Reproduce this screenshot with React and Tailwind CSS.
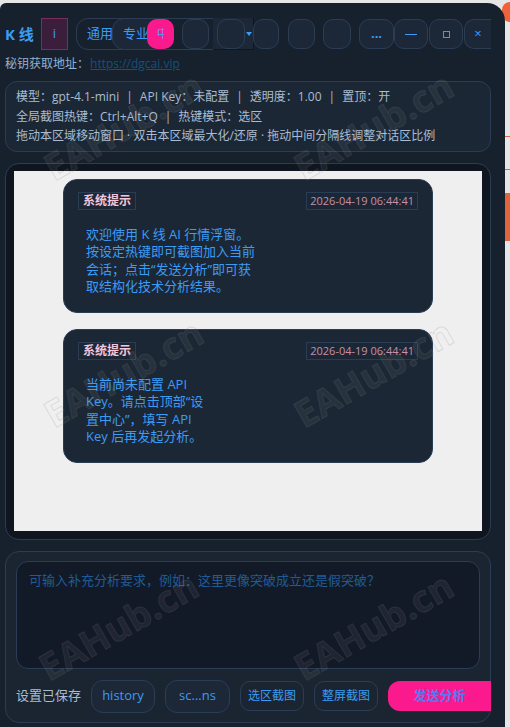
import React from 'react';

const Mark = ({ className }) => (
  <div className={`absolute font-['Open_Sans',sans-serif] font-bold text-[37px] leading-none text-white/[0.05] [-webkit-text-stroke:1px_rgba(120,120,120,0.2)] -rotate-[30deg] whitespace-nowrap ${className}`}>
    EAHub.cn
  </div>
);

const TopBtn = ({ className = '', children }) => (
  <div className={`shrink-0 h-[30px] flex items-center justify-center rounded-[10px] border border-[#2b3d55] bg-[#1c2737] text-[#3b9cf5] ${className}`}>
    {children}
  </div>
);

const Sep = () => <span className="mx-[7px]">|</span>;

const Message = ({ lines }) => (
  <div className="w-[370px] ml-[49px] rounded-[14px] border border-[#2b3d55] bg-[#1c2735] pl-[14px] pr-[14px] pt-[12px] pb-[17px]">
    <div className="flex items-center justify-between">
      <span className="border border-[#2b3d55] px-[4px] h-[18px] flex items-center text-[12px] font-bold text-[#f3c6dc]">系统提示</span>
      <span className="border border-[#2b3d55] px-[3px] h-[18px] flex items-center text-[11px] text-[#c98fa8]">2026-04-19 06:44:41</span>
    </div>
    <div className="mt-[16px] pl-[8px] text-[13px] leading-[17.3px] text-[#3b9cf5] whitespace-nowrap">
      {lines.map((l) => <div key={l}>{l}</div>)}
    </div>
  </div>
);

export default function App() {
  return (
    <div className="relative h-[727px] w-[510px] overflow-hidden bg-[#e6e6e6] font-['Open_Sans','Noto_Sans_CJK_SC',sans-serif]">
      {/* page behind the window, only a sliver shows */}
      <div className="absolute right-0 top-[2px] w-[8px] h-[20px] rounded-l-full bg-[#f0623a]" />
      <div className="absolute right-0 top-[136px] w-[5px] h-px bg-[#e8683e]" />
      <div className="absolute right-0 top-[169px] w-[5px] h-px bg-[#e8683e]" />
      <div className="absolute right-0 top-[193px] w-[5px] h-[48px] bg-[#e0653a]" />

      <div className="relative h-[724px] mt-[3px] w-[505px] rounded-tr-[18px] rounded-tl-[6px] bg-[#17212d] pl-[5px] pr-[14px] pt-[15px]">
        {/* title bar, the buttons really do overlap here */}
        <div className="flex items-center h-[32px]">
          <span className="text-[15px] font-bold text-[#3b9cf5] w-[36px] shrink-0">K 线</span>
          <div className="shrink-0 w-[27px] h-[32px] border border-[#7d2a5c] bg-[#3a1e3c] flex items-center justify-center text-[#3b9cf5] text-[13px]">i</div>
          <div className="relative ml-[8px] w-[180px] h-[32px] rounded-[12px] border border-[#2b3d55]">
            <span className="absolute left-[10px] top-[5px] text-[13px] text-[#3b9cf5]">通用</span>
            <div className="absolute left-[35px] -top-px w-[60px] h-[32px] rounded-[12px] border border-[#2b3d55] bg-[#1c2737]" />
            <span className="absolute left-[46px] top-[5px] text-[13px] text-[#3b9cf5]">专业</span>
            <div className="absolute left-[70px] top-0 w-[27px] h-[30px] rounded-[10px] bg-[#fb1a8e] flex items-center justify-center overflow-hidden">
              <span className="block w-[7px] overflow-hidden text-[12px] leading-none text-[#3b9cf5]">中</span>
            </div>
            <div className="absolute left-[105px] top-0 w-[27px] h-[30px] rounded-[10px] border border-[#2b3d55] bg-[#1c2737]" />
            <div className="absolute left-[136px] -top-px w-[41px] h-[32px] bg-[#1c2737] border-r border-b border-[#10161f]" />
            <div className="absolute left-[140px] top-0 w-[28px] h-[30px] rounded-[10px] border border-[#2b3d55] bg-[#1c2737]" />
            <span className="absolute left-[169px] top-[13px] w-0 h-0 border-x-[3px] border-x-transparent border-t-[4px] border-t-[#3b9cf5]" />
          </div>
          <div className="absolute left-[253px] top-[16px] flex items-center">
            <TopBtn className="w-[26px]" />
            <TopBtn className="w-[27px] ml-[9px]" />
            <TopBtn className="w-[28px] ml-[8px]" />
            <TopBtn className="w-[35px] ml-[8px] text-[13px] font-bold">...</TopBtn>
            <TopBtn className="w-[34px]"><span className="block w-[12px] h-px bg-[#3b9cf5]" /></TopBtn>
            <TopBtn className="w-[34px] ml-px"><span className="block w-[7px] h-[7px] border border-[#3b9cf5]" /></TopBtn>
            <TopBtn className="w-[27px] ml-px rounded-r-none border-r-0 text-[13px]">×</TopBtn>
          </div>
        </div>
        <div className="mt-[5px] h-[18px] flex items-center text-[12px] text-[#8fb2d6]">
          秘钥获取地址：<a className="ml-px text-[#12507f] underline">https://dgcai.vip</a>
        </div>
        {/* status */}
        <div className="mt-[8px] h-[71px] rounded-[12px] border border-[#2b3d55] bg-[#1c2735] px-[10px] pt-[5px] text-[12px] leading-[19.5px] text-[#a9bdd2] whitespace-nowrap">
          <div>模型：gpt-4.1-mini<Sep />API Key：未配置<Sep />透明度：1.00<Sep />置顶：开</div>
          <div>全局截图热键：Ctrl+Alt+Q<Sep />热键模式：选区</div>
          <div>拖动本区域移动窗口 · 双击本区域最大化/还原 · 拖动中间分隔线调整对话区比例</div>
        </div>
        {/* conversation */}
        <div className="mt-[11px] h-[377px] rounded-[14px] border border-[#2b3d55] bg-[#10161f] px-[8px] pt-[7px]">
          <div className="h-[360px] bg-[#efefef] pt-[8px] flex flex-col gap-[16px]">
            <Message lines={['欢迎使用 K 线 AI 行情浮窗。', '按设定热键即可截图加入当前', '会话；点击“发送分析”即可获', '取结构化技术分析结果。']} />
            <Message lines={['当前尚未配置 API', 'Key。请点击顶部“设', '置中心”，填写 API', 'Key 后再发起分析。']} />
          </div>
        </div>
        {/* input */}
        <div className="mt-[11px] h-[172px] rounded-[14px] border border-[#2b3d55] bg-[#1a2531] px-[10px] pt-[9px]">
          <div className="h-[108px] rounded-[12px] border border-[#2b3d55] bg-[#131a27] px-[12px] pt-[9px] text-[13px] text-[#1f5c97]">
            可输入补充分析要求，例如：这里更像突破成立还是假突破？
          </div>
          <div className="mt-[11px] flex items-center h-[32px] text-[13px]">
            <span className="text-[#a9bdd2] w-[75px] shrink-0">设置已保存</span>
            <div className="shrink-0 w-[64px] h-[33px] rounded-[12px] border border-[#2b3d55] bg-[#1c2737] text-[#3b9cf5] flex items-center justify-center">history</div>
            <div className="shrink-0 ml-[10px] w-[65px] h-[33px] rounded-[12px] border border-[#2b3d55] bg-[#1c2737] text-[#3b9cf5] flex items-center justify-center">sc...ns</div>
            <div className="shrink-0 ml-[10px] w-[64px] h-[30px] rounded-[10px] border border-[#2b3d55] text-[12px] text-[#3b9cf5] flex items-center justify-center">选区截图</div>
            <div className="shrink-0 ml-[10px] w-[64px] h-[30px] rounded-[10px] border border-[#2b3d55] text-[12px] text-[#3b9cf5] flex items-center justify-center">整屏截图</div>
            <div className="shrink-0 ml-[10px] w-[103px] h-[30px] rounded-l-[12px] bg-[#fb1a8e] text-[13px] font-bold text-[#5a78f0] flex items-center justify-center">发送分析</div>
          </div>
        </div>
      </div>
      <Mark className="left-[35px] top-[107px]" />
      <Mark className="left-[285px] top-[107px]" />
      <Mark className="left-[35px] top-[354px]" />
      <Mark className="left-[285px] top-[354px]" />
      <Mark className="left-[30px] top-[607px]" />
      <Mark className="left-[285px] top-[607px]" />
    </div>
  );
}
